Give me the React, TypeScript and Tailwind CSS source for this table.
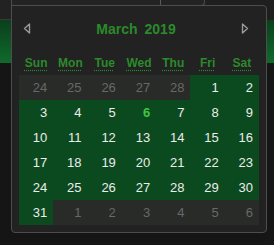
import React from 'react';

type Day = { n: number; inMonth: boolean; today?: boolean };

const weekdays = ['Sun', 'Mon', 'Tue', 'Wed', 'Thu', 'Fri', 'Sat'];

// March 2019 starts on a Friday; pad with Feb 24-28 and Apr 1-6
function buildWeeks(): Day[][] {
  const days: Day[] = [];
  for (let d = 24; d <= 28; d++) days.push({ n: d, inMonth: false });
  for (let d = 1; d <= 31; d++) days.push({ n: d, inMonth: true, today: d === 6 });
  for (let d = 1; days.length < 42; d++) days.push({ n: d, inMonth: false });
  const weeks: Day[][] = [];
  for (let i = 0; i < 42; i += 7) weeks.push(days.slice(i, i + 7));
  return weeks;
}

function Arrow({ dir }: { dir: 'left' | 'right' }) {
  return (
    <svg width="8" height="11" viewBox="0 0 8 11" className="block">
      {dir === 'left' ? (
        <path d="M6.5 1 L1.5 5.5 L6.5 10 Z" fill="none" stroke="#9a9a9a" strokeWidth="1.4" strokeLinejoin="round" />
      ) : (
        <path d="M1.5 1 L6.5 5.5 L1.5 10 Z" fill="none" stroke="#9a9a9a" strokeWidth="1.4" strokeLinejoin="round" />
      )}
    </svg>
  );
}

function Calendar() {
  const weeks = buildWeeks();
  return (
    <div className="absolute left-[11px] top-[5px] w-[256px] h-[228px] border border-[#4d4d4d] rounded-[4px] rounded-tl-none bg-[#222222] px-[7px] pb-[7px]">
      <div className="flex items-center h-[44px] pl-[4px] pr-[10px]">
        <button className="w-[8px]"><Arrow dir="left" /></button>
        <div className="flex-1 flex justify-center gap-[7px] pt-[2px] text-[14px] font-bold text-[#2b8a2b]">
          <span>March</span>
          <span>2019</span>
        </div>
        <button className="w-[8px]"><Arrow dir="right" /></button>
      </div>
      <div className="grid grid-cols-7 h-[25px] items-center">
        {weekdays.map(w => (
          <abbr
            key={w}
            className="text-center text-[12px] font-bold text-[#2b8a2b] no-underline"
          >
            <span className="underline decoration-dotted decoration-[#2b8a2b] underline-offset-[3px]">{w}</span>
          </abbr>
        ))}
      </div>
      {weeks.map((week, i) => (
        <div key={i} className="grid grid-cols-7">
          {week.map((day, j) => (
            <div
              key={j}
              className={
                'h-[25px] leading-[25px] text-right pr-[6px] text-[13px] ' +
                (day.inMonth ? 'bg-[#0b4a1f] ' : 'bg-[#292b29] text-[#686868] ') +
                (day.today ? 'text-[#3fc43f] font-bold' : day.inMonth ? 'text-[#ececec]' : '')
              }
            >
              {day.n}
            </div>
          ))}
        </div>
      ))}
    </div>
  );
}

export default function App() {
  return (
    <div
      className="relative w-[274px] h-[245px] overflow-hidden bg-[#1f1f1f]"
      style={{ fontFamily: '"Liberation Sans", Arial, sans-serif' }}
    >
      {/* page underneath the popup */}
      <div className="flex h-full">
        <div className="w-[11px] flex flex-col">
          <div className="h-[20px] bg-[#222222] border-b border-[#3a3a3a]" />
          <div className="h-[43px] bg-gradient-to-b from-[#0a3f1b] to-[#0f6b2d]" />
          <div className="flex-1 bg-[#151515]" />
        </div>
        <div className="flex-1 flex flex-col">
          <div className="relative w-[194px] h-[6px] border-x border-b border-[#4d4d4d] rounded-br-[4px] bg-[#232323]">
            <div className="absolute left-[148px] top-0 h-full border-l border-[#5a5a5a]" />
          </div>
          <div className="flex-1 bg-[#151515]" />
        </div>
        <div className="w-[8px] flex flex-col">
          <div className="h-[20px] bg-[#1f1f1f]" />
          <div className="h-[43px] bg-gradient-to-b from-[#0a3f1b] to-[#0f6b2d]" />
          <div className="flex-1 bg-[#161616]" />
        </div>
      </div>
      <Calendar />
    </div>
  );
}
